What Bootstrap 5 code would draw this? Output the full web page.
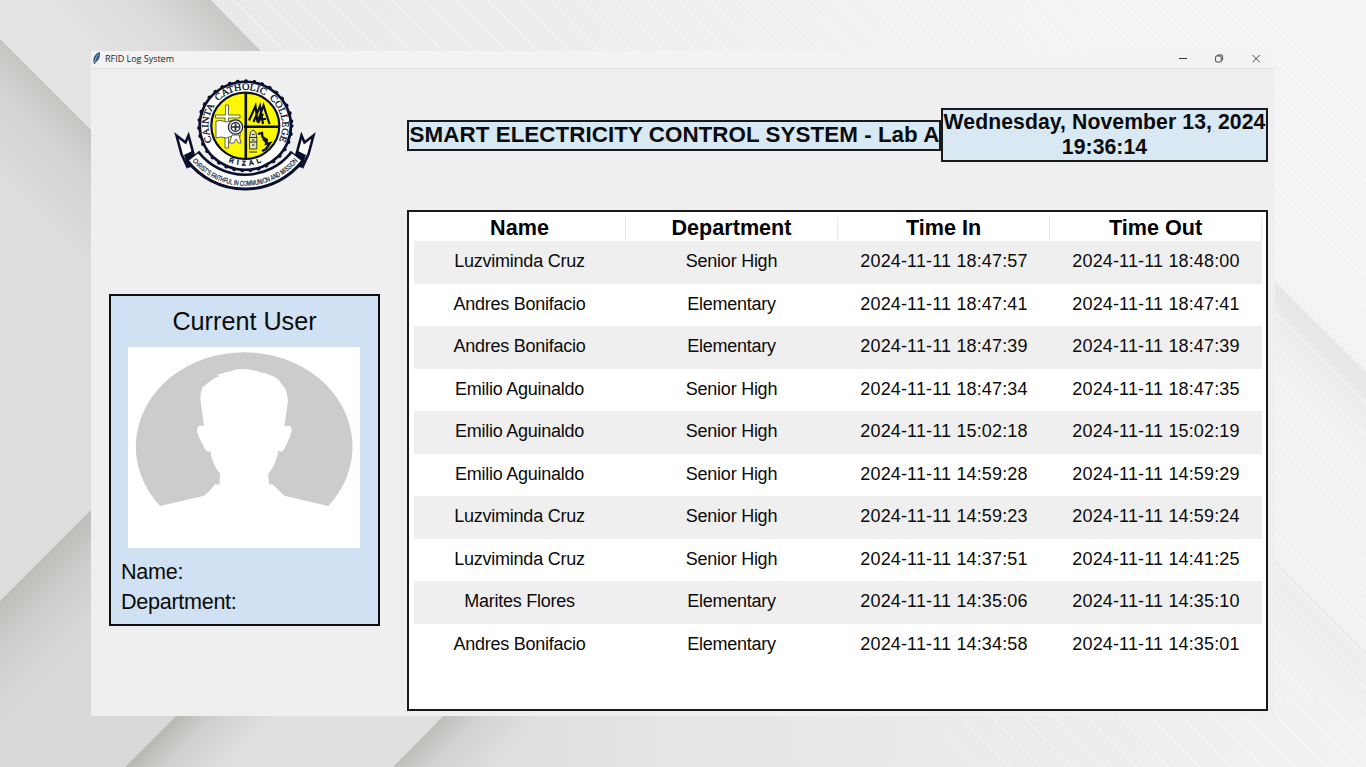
<!DOCTYPE html>
<html lang="en">
<head>
<meta charset="utf-8">
<meta name="viewport" content="width=device-width, initial-scale=1">
<title>RFID Log System</title>
<link href="https://cdn.jsdelivr.net/npm/bootstrap@5.3.0/dist/css/bootstrap.min.css" rel="stylesheet">
<style>
  body { font-family: "Liberation Sans", Arial, sans-serif; color: #0b0b0b; background: #e6e6e6; height: 767px; line-height: 1; }
  .backdrop { z-index: -1; }
  .app-window { width: 1184px; height: 665px; margin: 51px 0 0 91px; background: #efefef; }
  .title-strip { height: 18px; background: #f3f3f3; border-bottom: 1px solid #e0e0e0; padding-left: 1px; }
  .app-name { font: 9px/15px "Open Sans", "Noto Sans", sans-serif; margin-left: 4px; color: #222; letter-spacing: -.02px; }
  .win-buttons { gap: 27px; padding-right: 14px; }
  .side-col { width: 316px; }
  .seal { margin: 1px 0 0 74px; }
  .user-panel { width: 271px; height: 332px; margin: 94px 0 0 18px; background: #cfe1f2; border: 2px solid #0c0f12; padding: 12px 10px 0; }
  .user-panel h1 { font-size: 25.2px; line-height: 26px; margin: 0 0 13px; }
  .avatar { margin-left: 7px; }
  .user-line { font-size: 21.6px; line-height: 29.5px; letter-spacing: -.3px; }
  .user-lines { padding-top: 9px; }
  .top-row { height: 54px; margin-top: 39px; width: 861px; }
  .plate { background: #d9e9f4; border: 2px solid #17191c; font-weight: 700; white-space: nowrap; }
  .plate-title { width: 534px; height: 31px; font-size: 22.4px; line-height: 26px; letter-spacing: .04px; padding-left: .6px; }
  .plate-clock { width: 327px; height: 54px; font-size: 21.2px; line-height: 24.5px; letter-spacing: .08px; }
  .log-box { width: 861px; height: 501px; margin-top: 48px; background: #fff; border: 2px solid #17191c; padding: 5px 5px 0; }
  .log { table-layout: fixed; width: 848px; border-collapse: separate; border-spacing: 0; margin: 0; }
  .log th { height: 24px; padding: 0; font-size: 21.6px; line-height: 22px; text-align: center; vertical-align: top; border-right: 1px solid #e8e8e8; color: #000; }
  .log td { height: 42.54px; padding: 0 0 .8px; font-size: 18px; line-height: 41.7px; text-align: center; letter-spacing: .15px; vertical-align: top; }
  .log td:nth-child(-n+2) { letter-spacing: -.25px; padding-right: 1px; }
  .log tbody tr:nth-child(odd) td { background: #efefef; }
</style>
</head>
<body class="overflow-hidden position-relative">
<svg class="backdrop position-absolute top-0 start-0" width="1366" height="767" viewBox="0 0 1366 767" aria-hidden="true">
  <defs>
    <linearGradient id="base" gradientUnits="userSpaceOnUse" x1="0" y1="767" x2="1100" y2="100"><stop offset="0" stop-color="#d9d9d9"/><stop offset=".45" stop-color="#e5e5e5"/><stop offset="1" stop-color="#f3f3f3"/></linearGradient>
    <linearGradient id="sh1" gradientUnits="userSpaceOnUse" x1="46" y1="85" x2="-24" y2="155"><stop offset="0" stop-color="#c6c5c2"/><stop offset=".35" stop-color="#d3d3d2"/><stop offset="1" stop-color="#dddddd"/></linearGradient>
    <linearGradient id="sh2" gradientUnits="userSpaceOnUse" x1="236" y1="25" x2="146" y2="115"><stop offset="0" stop-color="#c9c8c5"/><stop offset=".4" stop-color="#dbdbda"/><stop offset="1" stop-color="#e4e4e4"/></linearGradient>
    <linearGradient id="sh3" gradientUnits="userSpaceOnUse" x1="45" y1="556" x2="105" y2="616"><stop offset="0" stop-color="#bfbdb9"/><stop offset=".4" stop-color="#cecdcc"/><stop offset="1" stop-color="#d9d9d9"/></linearGradient>
    <linearGradient id="sh4" gradientUnits="userSpaceOnUse" x1="150" y1="742" x2="200" y2="792"><stop offset="0" stop-color="#b9b7b3"/><stop offset=".4" stop-color="#d0d0cf"/><stop offset="1" stop-color="#dfdfdf"/></linearGradient>
    <linearGradient id="sh5" gradientUnits="userSpaceOnUse" x1="418" y1="741" x2="468" y2="791"><stop offset="0" stop-color="#c0beba"/><stop offset=".4" stop-color="#d3d3d2"/><stop offset="1" stop-color="#dedede"/></linearGradient>
    <linearGradient id="sh5f" gradientUnits="userSpaceOnUse" x1="480" y1="0" x2="1366" y2="0"><stop offset="0" stop-color="#e4e4e4" stop-opacity="0"/><stop offset=".25" stop-color="#e6e6e6"/><stop offset=".5" stop-color="#eaeaea"/><stop offset="1" stop-color="#f2f2f2"/></linearGradient>
    <linearGradient id="sh6" gradientUnits="userSpaceOnUse" x1="1320" y1="325" x2="1270" y2="375"><stop offset="0" stop-color="#e6e5e4"/><stop offset=".4" stop-color="#ededed"/><stop offset="1" stop-color="#f2f2f2"/></linearGradient>
    <linearGradient id="sh7" gradientUnits="userSpaceOnUse" x1="1320" y1="605" x2="1270" y2="655"><stop offset="0" stop-color="#ededed"/><stop offset="1" stop-color="#f1f1f1"/></linearGradient>
    <linearGradient id="lt" gradientUnits="userSpaceOnUse" x1="211" y1="0" x2="1100" y2="0"><stop offset="0" stop-color="#e9e9e9"/><stop offset="1" stop-color="#f4f4f4"/></linearGradient>
    <pattern id="stripes" patternUnits="userSpaceOnUse" width="22.4" height="22.4" patternTransform="translate(235 0) rotate(45)"><path d="M0 1H22.4" stroke="#fff" stroke-opacity=".3" stroke-width="2"/></pattern>
    <pattern id="stripesLow" patternUnits="userSpaceOnUse" width="22.4" height="22.4" patternTransform="translate(929 716) rotate(45)"><path d="M0 1H22.4" stroke="#fff" stroke-opacity=".3" stroke-width="2"/></pattern>
  </defs>
  <path fill="url(#base)" d="M0 0H1366V767H0z"/>
  <path fill="url(#sh2)" d="M0 0H211L411 200V450L0 39z"/>
  <path fill="url(#sh1)" d="M0 39L200 239V402L0 601z"/>
  <path fill="url(#sh3)" d="M0 601L200 401V692L125 767H0z"/>
  <path fill="url(#sh4)" d="M125 767L200 692H467L393 767z"/>
  <path fill="url(#sh5)" d="M393 767L467 692H1000V767z"/>
  <path fill="url(#sh5f)" d="M467 692H1366V767H467z"/>
  <path fill="url(#lt)" d="M211 0H1366V371L1200 205H411z"/>
  <path fill="url(#sh6)" d="M1200 206L1366 371V716H1200z"/>
  <path fill="url(#sh7)" d="M1200 486L1366 652V716H1200z"/>
  <path fill="url(#stripes)" d="M211 0H1366V700H900V205H416z"/>
  <path fill="url(#stripesLow)" d="M911 700H1366V767H978z"/>
</svg>

<main class="app-window d-flex flex-column">
  <header class="title-strip d-flex justify-content-between align-items-start">
    <div class="d-flex align-items-start">
      <svg width="9" height="15" viewBox="0 0 9 15" aria-hidden="true"><path d="M7.400 1.500C4 2.500 1.700 5.500 1.800 10.500L2.400 13L3.300 11.200C6.500 9.500 8 5.500 7.400 1.500Z" fill="#315f8e" stroke="#233848" stroke-width=".7"/><path d="M6.500 2.800Q3.700 6 2.500 11.500" fill="none" stroke="#9dc4df" stroke-width=".8"/></svg>
      <span class="app-name">RFID Log System</span>
    </div>
    <div class="win-buttons d-flex">
      <svg width="10" height="15" viewBox="0 0 10 15" fill="none" stroke="#333"><path d="M2 7.500H10"/></svg>
      <svg width="10" height="15" viewBox="0 0 10 15" fill="none" stroke="#333" stroke-width=".9"><rect x="1.600" y="5" width="5.600" height="6" rx="1.100"/><path d="M3 4.900Q3.200 3.900 4.400 3.900H7Q8.600 3.900 8.600 5.500V8.600Q8.600 9.500 7.500 9.700"/></svg>
      <svg width="10" height="15" viewBox="0 0 10 15" fill="none" stroke="#333" stroke-width=".9"><path d="M1.500 4L8.800 11.300M8.800 4L1.500 11.300"/></svg>
    </div>
  </header>

  <div class="d-flex flex-grow-1">
    <aside class="side-col">
      <svg class="seal d-block" width="160" height="130" viewBox="0 0 160 130" font-family="Liberation Serif, serif" fill="#0a0f2c" role="img" aria-label="Cainta Catholic College seal">
        <defs>
          <path id="ringTop" d="M47 71.500A37 36 0 1 1 113.600 71.500"/>
          <path id="ringLow" d="M50.300 82.500A41 40.500 0 0 0 110.300 82.500"/>
          <path id="motto" d="M24.500 87.500A68.500 68.500 0 0 0 135.500 87.500"/>
        </defs>
        <g fill="#fff" stroke="#0a0f2c" stroke-width="2.600" stroke-linejoin="miter">
          <path d="M11.500 65.500L20.500 72.500L23.500 65.500L28.500 84L22 96L16.500 84Z"/>
          <path d="M148.500 65.500L139.500 72.500L136.500 65.500L131.500 84L138 96L143.500 84Z"/>
        </g>
        <path d="M19 85L27 81L32 95L23 98Z M141 85L133 81L128 95L137 98Z"/>
        <ellipse cx="80.300" cy="55.800" rx="47" ry="45.300"/>
        <ellipse cx="80.300" cy="55.800" rx="46.300" ry="44.700" fill="none" stroke="#0a0f2c" stroke-width="3.800" stroke-linecap="round" stroke-dasharray=".1 8.160"/>
        <ellipse cx="80.300" cy="55.800" rx="44.300" ry="42.700" fill="#fff"/>
        <ellipse cx="80.300" cy="55.800" rx="34" ry="33.200" fill="#fcf800" stroke="#0a0f2c" stroke-width="2.200"/>
        <path d="M80.800 22V89M79 56.800H114" stroke="#0a0f2c" stroke-width="2.600"/>
        <g fill="#fff" stroke="#22263c" stroke-width=".7">
          <path d="M60.500 35H63.500V45H75V48H63.500V78H60V48H50.500V45H60.500Z"/>
          <path d="M51 51Q56 49.500 61 52Q66 49.500 75 51V66.500Q67 65 61.500 68Q56 66 51 68Z"/>
          <path d="M67 65L64.500 73H69L71 69L73.500 73H76L74 65Z"/>
          <circle cx="70.500" cy="57" r="7.200" fill="#ddd" stroke-width="1.200"/>
          <circle cx="70.500" cy="57" r="4.300" stroke-width="1.200"/>
          <path d="M70.500 53.500V60.500M67 57H74" stroke-width="1.700"/>
        </g>
        <path d="M84 50.500L90.500 36L92.500 52M88.500 52L95 36L98 54M94 48L98.500 35.500L104.500 54M93 53L98 44M91 49H101" fill="none" stroke="#0a0f2c" stroke-width="2.200"/>
        <path d="M84.500 79V68L85.500 62L88 60L90.800 62L91.800 68V79Z" fill="#e5dfac" stroke="#22263c" stroke-width=".9"/>
        <path d="M84.500 67.500H92M84.500 72H92M87 64.500H89.500M87 70H89.500M87 75H89.500M84 82H92" stroke="#22263c" stroke-width="1.200"/>
        <path d="M93 64L97 63L97.500 67L102 70L101 74L105 73L101 79L97 81M98 69L101 72" fill="none" stroke="#0a0f2c" stroke-width="2.300"/>
        <text font-size="9.600" stroke="#0a0f2c" stroke-width=".3"><textPath href="#ringTop" textLength="146" lengthAdjust="spacingAndGlyphs">CAINTA&#160; CATHOLIC&#160; COLLEGE</textPath></text>
        <text font-family="Liberation Sans, sans-serif" font-weight="700" font-size="6.800" letter-spacing="3.400" text-anchor="middle" stroke="#0a0f2c" stroke-width=".3"><textPath href="#ringLow" startOffset="52%">RIZAL</textPath></text>
        <path d="M27.500 86A66 66 0 0 0 132.500 86" fill="none" stroke="#0a0f2c" stroke-width="17"/>
        <path d="M28.500 87A66 66 0 0 0 131.500 87" fill="none" stroke="#fff" stroke-width="11.500"/>
        <text font-family="Liberation Sans, sans-serif" font-size="7.200" stroke="#0a0f2c" stroke-width=".2"><textPath href="#motto" startOffset="4.500" textLength="120" lengthAdjust="spacingAndGlyphs">CHRIST'S FAITHFUL IN COMMUNION AND MISSION</textPath></text>
      </svg>

      <section class="user-panel">
        <h1 class="text-center fw-normal">Current User</h1>
        <svg class="avatar d-block" width="232" height="201" viewBox="84 186 696 603" role="img" aria-label="No photo">
          <path fill="#fff" d="M84 186H780V789H84z"/>
          <path fill="#ccc" d="M180 663A325 283 0 1 1 685 663L553 632L520 600Q515 596 508 599Q504 583 505 566Q529 536 535 497Q546 506 553 491Q570 458 575 437Q575 418 553 424L564 348Q562 313 543 295Q533 276 508 269L486 261L493 267Q462 252 427 252Q404 252 391 258L402 257Q370 262 349 271L361 272Q331 283 311 306L314 297Q301 314 301 341L312 423Q292 416 291 437Q294 455 314 490Q321 506 331 497Q336 538 360 566L359 597Q351 601 345 597Q330 620 312 632Z"/>
        </svg>
        <div class="user-lines">
          <div class="user-line">Name:</div>
          <div class="user-line">Department:</div>
        </div>
      </section>
    </aside>

    <section>
      <div class="top-row d-flex align-items-center">
        <div class="plate plate-title">SMART ELECTRICITY CONTROL SYSTEM - Lab A</div>
        <div class="plate plate-clock text-center">Wednesday, November 13, 2024<br>19:36:14</div>
      </div>
      <div class="log-box">
        <table class="log">
          <thead><tr><th>Name</th><th>Department</th><th>Time In</th><th>Time Out</th></tr></thead>
          <tbody>
            <tr><td>Luzviminda Cruz</td><td>Senior High</td><td>2024-11-11 18:47:57</td><td>2024-11-11 18:48:00</td></tr>
            <tr><td>Andres Bonifacio</td><td>Elementary</td><td>2024-11-11 18:47:41</td><td>2024-11-11 18:47:41</td></tr>
            <tr><td>Andres Bonifacio</td><td>Elementary</td><td>2024-11-11 18:47:39</td><td>2024-11-11 18:47:39</td></tr>
            <tr><td>Emilio Aguinaldo</td><td>Senior High</td><td>2024-11-11 18:47:34</td><td>2024-11-11 18:47:35</td></tr>
            <tr><td>Emilio Aguinaldo</td><td>Senior High</td><td>2024-11-11 15:02:18</td><td>2024-11-11 15:02:19</td></tr>
            <tr><td>Emilio Aguinaldo</td><td>Senior High</td><td>2024-11-11 14:59:28</td><td>2024-11-11 14:59:29</td></tr>
            <tr><td>Luzviminda Cruz</td><td>Senior High</td><td>2024-11-11 14:59:23</td><td>2024-11-11 14:59:24</td></tr>
            <tr><td>Luzviminda Cruz</td><td>Senior High</td><td>2024-11-11 14:37:51</td><td>2024-11-11 14:41:25</td></tr>
            <tr><td>Marites Flores</td><td>Elementary</td><td>2024-11-11 14:35:06</td><td>2024-11-11 14:35:10</td></tr>
            <tr><td>Andres Bonifacio</td><td>Elementary</td><td>2024-11-11 14:34:58</td><td>2024-11-11 14:35:01</td></tr>
          </tbody>
        </table>
      </div>
    </section>
  </div>
</main>
<script src="https://cdn.jsdelivr.net/npm/bootstrap@5.3.0/dist/js/bootstrap.bundle.min.js"></script>
</body>
</html>
